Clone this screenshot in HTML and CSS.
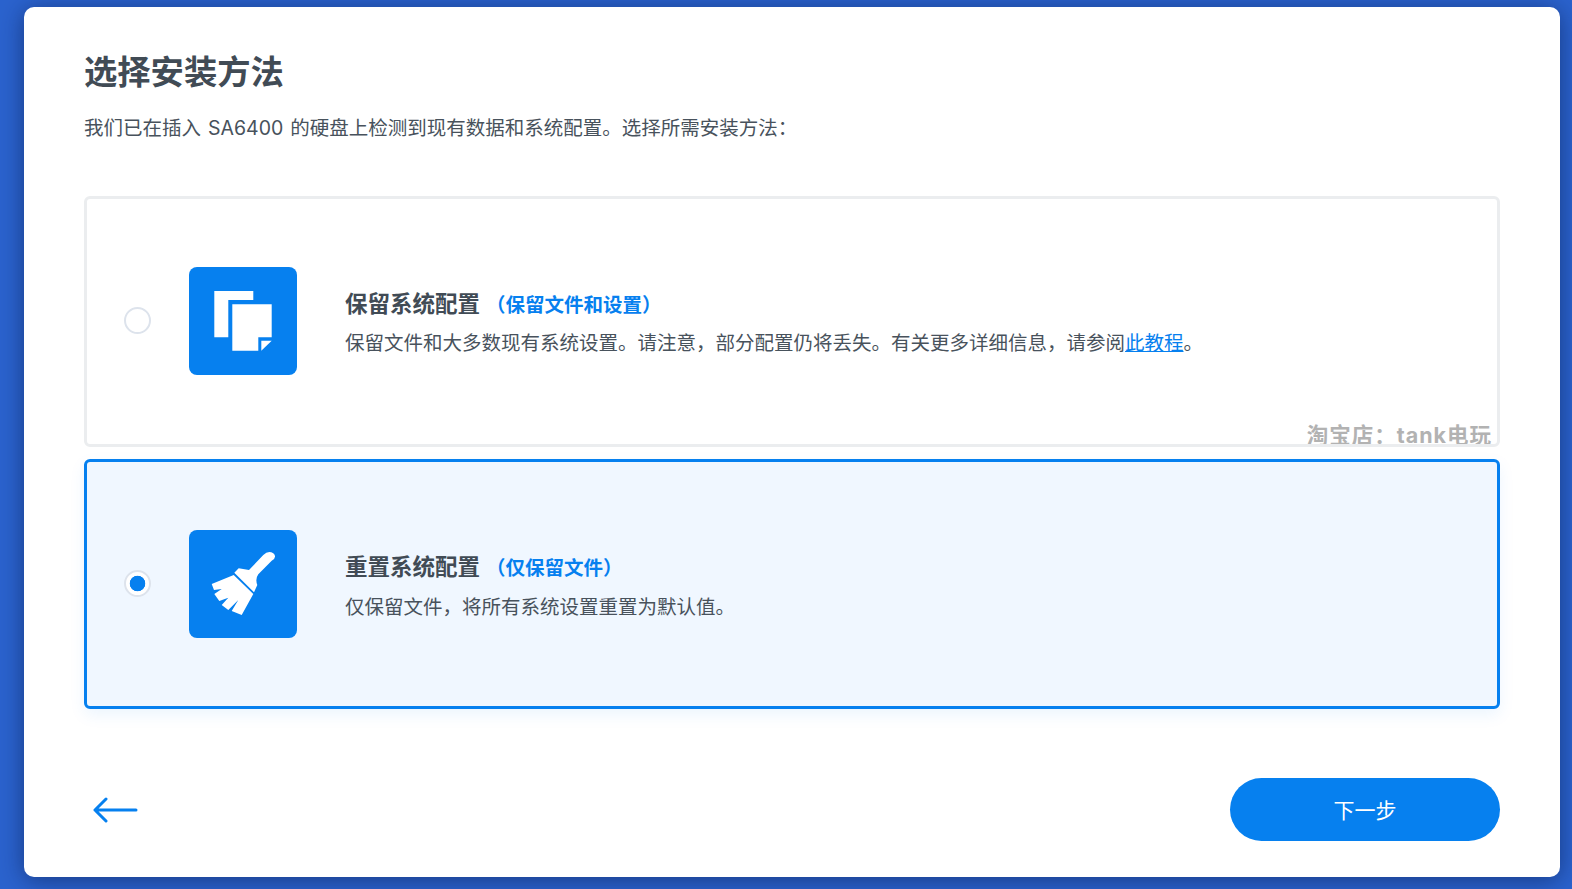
FILE: index.html
```html
<!DOCTYPE html>
<html lang="zh-CN">
<head>
<meta charset="utf-8">
<title>选择安装方法</title>
<link rel="stylesheet" href="styles.css">
</head>
<body>
<main class="card">
  <h1 class="title">选择安装方法</h1>
  <p class="intro">我们已在插入 SA6400 的硬盘上检测到现有数据和系统配置。选择所需安装方法：</p>
  <section class="options">
    <div class="option">
      <span class="radio"></span>
      <span class="tile">
        <svg viewBox="0 0 108 108" width="108" height="108">
          <path fill="#fff" d="M25.3 24H64.3V33H39.3V70.3H25.3Z"/>
          <path fill="#fff" d="M43.3 37.3H82.7V70.3H69.3V83.7H43.3Z"/>
          <path fill="#fff" d="M72.3 73.7H82.7L72.3 83.7Z"/>
        </svg>
      </span>
      <div class="copy">
        <div class="name">保留系统配置<span class="hint">（保留文件和设置）</span></div>
        <p class="desc">保留文件和大多数现有系统设置。请注意，部分配置仍将丢失。有关更多详细信息，请参阅<a class="link" href="#">此教程</a>。</p>
      </div>
      <span class="watermark">淘宝店：tank电玩</span>
    </div>
    <div class="option selected">
      <span class="radio"></span>
      <span class="tile">
        <svg viewBox="0 0 108 108" width="108" height="108">
          <path fill="#fff" d="M45.3 42.7L49.7 38.3L60 40L74.3 25Q79.3 20 84.3 23.3Q88.5 27 82.7 30.7L69.3 44.3Q66 49 68.3 55L65 62.3Z"/>
          <path fill="#fff" d="M44.7 45L22.7 54L25 60L32.7 59L25.3 64L30.3 71L39.3 67.7L32.7 75L39.3 80L49.3 70L42.7 81L52.7 85L64.3 64Z"/>
        </svg>
      </span>
      <div class="copy">
        <div class="name">重置系统配置<span class="hint">（仅保留文件）</span></div>
        <p class="desc">仅保留文件，将所有系统设置重置为默认值。</p>
      </div>
    </div>
  </section>
  <footer class="footer">
    <a class="back" href="#" aria-label="返回">
      <svg viewBox="0 0 46 26" width="46" height="26">
        <path fill="none" stroke="#0680ef" stroke-width="3" stroke-linecap="round" stroke-linejoin="round" d="M13 2L2 13L13 24M2 13H43"/>
      </svg>
    </a>
    <button class="next" type="button">下一步</button>
  </footer>
</main>
</body>
</html>
```

FILE: styles.css
```css
* { box-sizing: border-box; }
html, body { height: 100%; margin: 0; }
body {
  padding: 7px 12px 12px 24px;
  background: #2b63ce;
  font-family: Inter, "Noto Sans CJK SC", sans-serif;
  color: #48525c;
  overflow: hidden;
}
.card {
  height: 870px;
  padding: 42px 60px 36px;
  display: flex;
  flex-direction: column;
  background: #fff;
  border-radius: 10px;
  box-shadow: 0 3px 24px rgba(10, 30, 80, .6);
}
.title {
  margin: 0;
  font-size: 33.3px;
  line-height: 46px;
  font-weight: 700;
  color: #414b55;
}
.intro {
  margin: 18px 0 0;
  font-size: 19.5px;
  line-height: 30px;
  word-spacing: 1.5px;
}
.options {
  margin-top: 53px;
  display: flex;
  flex-direction: column;
  gap: 12px;
}
.option {
  position: relative;
  height: 251px;
  padding-left: 37px;
  padding-bottom: 2px;
  display: flex;
  align-items: center;
  border: 3px solid #ebedef;
  border-radius: 6px;
  background: #fff;
  overflow: hidden;
}
.option.selected {
  height: 250px;
  padding-bottom: 0;
  border-color: #0680ef;
  background: #f0f7ff;
  box-shadow: 0 6px 16px rgba(6, 128, 239, .08);
  overflow: visible;
}
.radio {
  width: 27px;
  height: 27px;
  flex: none;
  border: 2px solid #dde3ec;
  border-radius: 50%;
  background: #fff;
}
.selected .radio {
  margin-bottom: 2px;
  background: radial-gradient(circle, #0680ef 0 7.5px, #fff 8.1px);
}
.tile {
  width: 108px;
  height: 108px;
  flex: none;
  margin-left: 38px;
  border-radius: 8px;
  background: #0680ef;
  display: flex;
}
.copy {
  margin-left: 48px;
  padding-top: 5px;
}
.selected .copy { padding-top: 4px; }
.name {
  font-size: 22.5px;
  line-height: 32px;
  font-weight: 700;
  color: #414b55;
}
.hint {
  margin-left: 6px;
  font-size: 19.5px;
  color: #0680ef;
}
.desc {
  margin: 7px 0 0;
  font-size: 19.5px;
  line-height: 30px;
}
.selected .desc { margin-top: 8px; }
.link { color: #0680ef; text-decoration: underline; }
.watermark {
  position: absolute;
  right: 5px;
  bottom: -3px;
  font-size: 21.5px;
  line-height: 24px;
  font-weight: 700;
  letter-spacing: 1px;
  color: #b2b2b2;
}
.footer {
  margin-top: auto;
  display: flex;
  align-items: center;
  justify-content: space-between;
}
.back { display: flex; margin-left: 9px; }
.next {
  width: 270px;
  height: 63px;
  padding: 0 0 2px;
  border: 0;
  border-radius: 32px;
  background: #0680ef;
  color: #fff;
  font-family: inherit;
  font-size: 21px;
}
```
